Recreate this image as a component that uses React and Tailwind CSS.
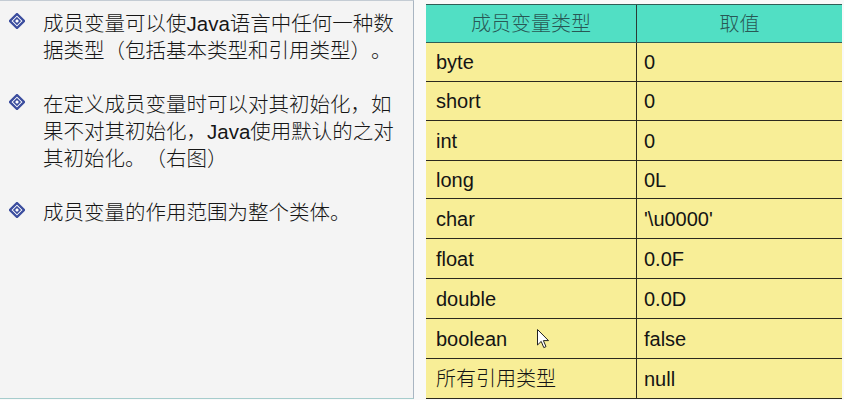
import React from "react";

const FONT = { fontFamily: '"Liberation Sans", "Noto Sans CJK SC", sans-serif' };

function Bullet() {
  return (
    <svg width="16" height="16" viewBox="0 0 16 16" className="block">
      <path d="M8 1 L15 8 L8 15 L1 8 Z" fill="#ffffff" stroke="#3b4d9e" strokeWidth="2.3" />
      <path d="M8 5 L11 8 L8 11 L5 8 Z" fill="#ffffff" stroke="#3b4d9e" strokeWidth="1.6" />
    </svg>
  );
}

function Item({ lines, last }) {
  return (
    <div className={last ? "flex" : "flex mb-[27px]"}>
      <div className="w-[43px] shrink-0 pl-[9px] pt-[3px]">
        <Bullet />
      </div>
      <div className="text-[20.5px] leading-[27px] font-light text-[#161616] whitespace-nowrap [text-spacing-trim:space-all]">
        {lines.map((l, i) => (
          <div key={i}>{l}</div>
        ))}
      </div>
    </div>
  );
}

const rows = [
  ["byte", "0", "h-[39px]"],
  ["short", "0", "h-[39px]"],
  ["int", "0", "h-[40px]"],
  ["long", "0L", "h-[38px]"],
  ["char", "'\\u0000'", "h-[40px]"],
  ["float", "0.0F", "h-[40px]"],
  ["double", "0.0D", "h-[40px]"],
  ["boolean", "false", "h-[40px]"],
  ["所有引用类型", "null", "h-[40px]"],
];

export default function App() {
  return (
    <div className="relative w-[844px] h-[400px] overflow-hidden bg-[#f9f9f9] flex" style={FONT}>
      {/* left panel */}
      <div className="w-[414px] h-[399px] shrink-0 bg-[#f4f4f4] border-t border-t-[#c4ccd4] border-r border-r-[#a9b5c2] border-b border-b-[#a6cccc] pt-[9px]">
        <Item lines={["成员变量可以使Java语言中任何一种数", "据类型（包括基本类型和引用类型）。"]} />
        <Item
          lines={[
            "在定义成员变量时可以对其初始化，如",
            "果不对其初始化，Java使用默认的之对",
            "其初始化。（右图）",
          ]}
        />
        <Item lines={["成员变量的作用范围为整个类体。"]} last />
      </div>

      {/* gap strip */}
      <div className="w-[12px] shrink-0" />

      {/* table */}
      <div className="w-[416px] shrink-0 pt-[4px]">
        <div className="flex h-[39px] bg-[#51dfc4] border-t border-b border-[#2f5e56] text-[20px] font-light text-[#285855] [text-spacing-trim:space-all]">
          <div className="w-[211px] border-r border-[#2a3a36] flex items-center justify-center">成员变量类型</div>
          <div className="flex-1 flex items-center justify-center">取值</div>
        </div>
        {rows.map(([a, b, h]) => (
          <div key={a} className={`flex ${h} bg-[#f8ee97] border-b border-[#2c2a1e] text-[20px] font-light text-[#141414]`}>
            <div className="w-[211px] border-r border-[#2c2a1e] flex items-center pl-[10px]">{a}</div>
            <div className="flex-1 flex items-center pl-[7px]">{b}</div>
          </div>
        ))}
      </div>

      {/* mouse cursor */}
      <svg className="absolute left-[537px] top-[329px]" width="13" height="20" viewBox="0 0 13 20">
        <path
          d="M0.5 0.5 L0.5 16 L4.2 12.4 L6.8 18.6 L9 17.6 L6.4 11.6 L11.5 11.6 Z"
          fill="#ffffff"
          stroke="#222222"
          strokeWidth="1"
          strokeLinejoin="round"
        />
      </svg>
    </div>
  );
}
